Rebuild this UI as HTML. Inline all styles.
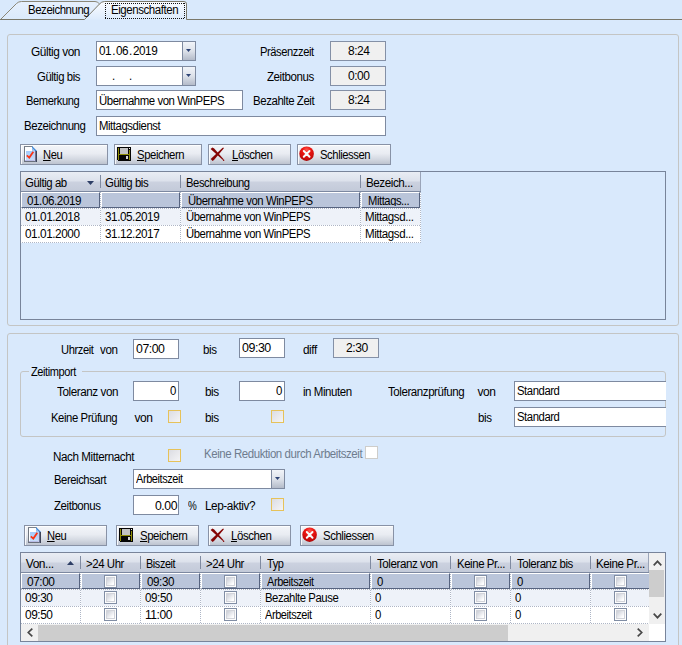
<!DOCTYPE html>
<html lang="de"><head><meta charset="utf-8"><title>Eigenschaften</title>
<style>
html,body{margin:0;padding:0}
body{width:682px;height:645px;overflow:hidden;background:#D9E9FC;position:relative;font-family:"Liberation Sans", sans-serif;font-size:11px;color:#000}
div,span.t,svg{position:absolute;box-sizing:border-box}
span.t{white-space:pre;line-height:14px;height:14px;font-size:12px;letter-spacing:-0.45px;transform-origin:0 0}
u{text-decoration:underline;text-underline-offset:1px}
.in{background:#fff;border:1px solid #7E8AA0}
.ro{background:#F0F0F0;border:1px solid #8490A6}
.btn{box-shadow:inset 1px 1px 0 rgba(255,255,255,.85);border:1px solid #8892A6;background:linear-gradient(#F3F5F9 0%,#E9ECF2 45%,#D3D8E1 75%,#BDC3CF 100%)}
.dd{border:1px solid #7E8AA0;background:linear-gradient(#F1F4F9 0%,#DDE2EA 50%,#B4BBC9 100%)}
.cb{border:1px solid #E6C25A;background:linear-gradient(135deg,#DCDDE2,#F4F4F6)}
.gc{border:1px solid #808DA4;background:#FDFDFD}
.gc::after{content:"";position:absolute;left:1px;top:1px;right:1px;bottom:1px;border:1px solid #D2D4DA;background:linear-gradient(135deg,#D0D3DB 10%,#FFFFFF 85%)}
.hd{background:linear-gradient(#E9EDF4 0%,#DDE2EC 45%,#CBD1DF 55%,#C3CAD9 100%)}
</style></head><body>
<svg width="682" height="22" style="left:0;top:0" viewBox="0 0 682 22">
<defs><linearGradient id="tg" x1="0" y1="0" x2="0" y2="1"><stop offset="0" stop-color="#E6F0FD"/><stop offset="1" stop-color="#DBEAFC"/></linearGradient>
<linearGradient id="tg2" x1="0" y1="0" x2="0" y2="1"><stop offset="0" stop-color="#FAFCFF"/><stop offset="1" stop-color="#DDEBFC"/></linearGradient></defs>
<path d="M0.5,19.5 L16.5,3.5 Q18.5,1.5 21.5,1.5 L95,1.5 Q98,1.5 99.5,3.5 L99.5,19.5 Z" fill="url(#tg)" stroke="none"/>
<path d="M0.5,19.5 L16.5,3.5 Q18.5,1.5 21.5,1.5 L95,1.5 Q98,1.5 99.5,4" fill="none" stroke="#8A8778" stroke-width="1"/>
<path d="M84.5,19.5 L99.5,4 Q101.5,1.5 104.5,1.5 L184,1.5 Q186.5,1.5 186.5,4 L186.5,19.5 Z" fill="url(#tg2)" stroke="none"/>
<path d="M0,19.5 L84.5,19.5 L99.5,4 Q101.5,1.5 104.5,1.5 L184,1.5 Q186.5,1.5 186.5,4 L186.5,19.5 L682,19.5" fill="none" stroke="#7A786A" stroke-width="1"/>
</svg>
<div style="left:105px;top:3px;width:80px;height:1px;background:repeating-linear-gradient(90deg,#111 0 1px,transparent 1px 2px)"></div>
<div style="left:105px;top:18px;width:80px;height:1px;background:repeating-linear-gradient(90deg,#111 0 1px,transparent 1px 2px)"></div>
<div style="left:105px;top:3px;width:1px;height:16px;background:repeating-linear-gradient(180deg,#111 0 1px,transparent 1px 2px)"></div>
<div style="left:184px;top:3px;width:1px;height:16px;background:repeating-linear-gradient(180deg,#111 0 1px,transparent 1px 2px)"></div>
<div style="left:7px;top:34px;width:672px;height:292px;border:1px solid #C4C5C4;border-radius:3px"></div>
<div style="left:7px;top:333px;width:672px;height:330px;border:1px solid #C4C5C4;border-radius:3px"></div>
<div class="in" style="left:96px;top:41px;width:100px;height:20px"></div>
<div class="dd" style="left:182px;top:41px;width:14px;height:20px"></div>
<svg width="5" height="3" style="left:186px;top:49px" viewBox="0 0 5 3"><path d="M0,0 L5,0 L2.5,3 Z" fill="#2E4475"/></svg>
<div class="in" style="left:96px;top:66px;width:100px;height:20px"></div>
<div class="dd" style="left:182px;top:66px;width:14px;height:20px"></div>
<svg width="5" height="3" style="left:186px;top:74px" viewBox="0 0 5 3"><path d="M0,0 L5,0 L2.5,3 Z" fill="#2E4475"/></svg>
<div class="in" style="left:96px;top:90px;width:147px;height:20px"></div>
<div class="in" style="left:96px;top:116px;width:290px;height:20px"></div>
<div class="ro" style="left:330px;top:41px;width:56px;height:20px"></div>
<div class="ro" style="left:330px;top:66px;width:56px;height:20px"></div>
<div class="ro" style="left:330px;top:90px;width:56px;height:20px"></div>
<div class="btn" style="left:20px;top:144px;width:88px;height:21px"></div>
<svg width="13" height="16" style="left:24px;top:146px" viewBox="0 0 13 16">
<defs><linearGradient id="ng1" x1="0" y1="0" x2="0" y2="1"><stop offset="0" stop-color="#A3CBFB"/><stop offset="1" stop-color="#C6DCF9"/></linearGradient></defs>
<path d="M0,0 L8,0 L13,5 L13,16 L0,16 Z" fill="#FDFEFF"/>
<rect x="2" y="5" width="8" height="9" fill="url(#ng1)"/>
<rect x="1" y="14" width="10" height="1" fill="#B9BDE6"/>
<rect x="10" y="5" width="1" height="10" fill="#C9CDEC"/>
<rect x="0" y="0" width="1" height="16" fill="#6F7680"/>
<rect x="0" y="0" width="8.5" height="1" fill="#7B828C"/>
<rect x="0" y="15" width="12" height="1" fill="#6A707C"/>
<rect x="11" y="4" width="1" height="12" fill="#6A7390"/>
<rect x="12" y="5" width="1" height="11" fill="#3E4458"/>
<path d="M8,0 L13,5 L11,5 L8,2 Z" fill="#2C7BD0"/>
<path d="M8,1.2 L8,4.8 L11.4,4.8 Z" fill="#8FB9EA"/>
<path d="M2.8,9.4 L5.3,11.6 L9.3,5.8" fill="none" stroke="#FA3414" stroke-width="1.8"/>
</svg>
<div class="btn" style="left:114px;top:144px;width:88px;height:21px"></div>
<svg width="14" height="14" style="left:117px;top:147px" viewBox="0 0 14 14" shape-rendering="crispEdges">
<path d="M0,0 L14,0 L14,14 L1,14 L1,13 L0,13 Z" fill="#050505"/>
<rect x="1" y="1" width="1" height="12" fill="#8E8C06"/>
<rect x="12" y="3" width="1" height="10" fill="#8E8C06"/>
<rect x="1" y="7" width="12" height="1" fill="#8E8C06"/>
<rect x="3" y="1" width="8" height="6" fill="#C2C2C2"/>
<rect x="12" y="1" width="1" height="1" fill="#F4F4F4"/>
<rect x="9" y="9" width="2" height="3" fill="#D6D6D6"/>
</svg>
<div class="btn" style="left:208px;top:144px;width:83px;height:21px"></div>
<svg width="15" height="15" style="left:209.5px;top:147.3px" viewBox="0 0 15 15">
<path d="M0.6,1.9 L2.4,0.5 L4.2,1.6 L13.6,12.2 L13.1,13 L12.3,12.6 Z" fill="#840404"/>
<circle cx="13.6" cy="13.2" r="0.75" fill="#840404"/>
<path d="M0.7,12.1 L2.5,14 L4,12.9 L13.9,1.3 L13.3,0.6 L12.4,0.9 Z" fill="#840404"/>
</svg>
<div class="btn" style="left:297px;top:144px;width:94px;height:21px"></div>
<svg width="16" height="16" style="left:299px;top:146px" viewBox="0 0 16 16">
<defs><radialGradient id="cg4" cx="0.5" cy="0.25" r="0.8"><stop offset="0" stop-color="#FF5A52"/><stop offset="0.35" stop-color="#EC1612"/><stop offset="0.8" stop-color="#C40A0A"/><stop offset="1" stop-color="#8A0606"/></radialGradient></defs>
<circle cx="7.6" cy="7.7" r="7.3" fill="url(#cg4)"/>
<path d="M4.8,5 L10.5,10.7 M10.5,5 L4.8,10.7" stroke="#F8FBFB" stroke-width="2" stroke-linecap="round" fill="none"/>
</svg>
<div class="btn" style="left:24px;top:525px;width:83px;height:21px"></div>
<svg width="13" height="16" style="left:28px;top:527px" viewBox="0 0 13 16">
<defs><linearGradient id="ng5" x1="0" y1="0" x2="0" y2="1"><stop offset="0" stop-color="#A3CBFB"/><stop offset="1" stop-color="#C6DCF9"/></linearGradient></defs>
<path d="M0,0 L8,0 L13,5 L13,16 L0,16 Z" fill="#FDFEFF"/>
<rect x="2" y="5" width="8" height="9" fill="url(#ng5)"/>
<rect x="1" y="14" width="10" height="1" fill="#B9BDE6"/>
<rect x="10" y="5" width="1" height="10" fill="#C9CDEC"/>
<rect x="0" y="0" width="1" height="16" fill="#6F7680"/>
<rect x="0" y="0" width="8.5" height="1" fill="#7B828C"/>
<rect x="0" y="15" width="12" height="1" fill="#6A707C"/>
<rect x="11" y="4" width="1" height="12" fill="#6A7390"/>
<rect x="12" y="5" width="1" height="11" fill="#3E4458"/>
<path d="M8,0 L13,5 L11,5 L8,2 Z" fill="#2C7BD0"/>
<path d="M8,1.2 L8,4.8 L11.4,4.8 Z" fill="#8FB9EA"/>
<path d="M2.8,9.4 L5.3,11.6 L9.3,5.8" fill="none" stroke="#FA3414" stroke-width="1.8"/>
</svg>
<div class="btn" style="left:116px;top:525px;width:83px;height:21px"></div>
<svg width="14" height="14" style="left:119px;top:528px" viewBox="0 0 14 14" shape-rendering="crispEdges">
<path d="M0,0 L14,0 L14,14 L1,14 L1,13 L0,13 Z" fill="#050505"/>
<rect x="1" y="1" width="1" height="12" fill="#8E8C06"/>
<rect x="12" y="3" width="1" height="10" fill="#8E8C06"/>
<rect x="1" y="7" width="12" height="1" fill="#8E8C06"/>
<rect x="3" y="1" width="8" height="6" fill="#C2C2C2"/>
<rect x="12" y="1" width="1" height="1" fill="#F4F4F4"/>
<rect x="9" y="9" width="2" height="3" fill="#D6D6D6"/>
</svg>
<div class="btn" style="left:208px;top:525px;width:83px;height:21px"></div>
<svg width="15" height="15" style="left:209.7px;top:528.3px" viewBox="0 0 15 15">
<path d="M0.6,1.9 L2.4,0.5 L4.2,1.6 L13.6,12.2 L13.1,13 L12.3,12.6 Z" fill="#840404"/>
<circle cx="13.6" cy="13.2" r="0.75" fill="#840404"/>
<path d="M0.7,12.1 L2.5,14 L4,12.9 L13.9,1.3 L13.3,0.6 L12.4,0.9 Z" fill="#840404"/>
</svg>
<div class="btn" style="left:300px;top:525px;width:94px;height:21px"></div>
<svg width="16" height="16" style="left:302px;top:527px" viewBox="0 0 16 16">
<defs><radialGradient id="cg8" cx="0.5" cy="0.25" r="0.8"><stop offset="0" stop-color="#FF5A52"/><stop offset="0.35" stop-color="#EC1612"/><stop offset="0.8" stop-color="#C40A0A"/><stop offset="1" stop-color="#8A0606"/></radialGradient></defs>
<circle cx="7.6" cy="7.7" r="7.3" fill="url(#cg8)"/>
<path d="M4.8,5 L10.5,10.7 M10.5,5 L4.8,10.7" stroke="#F8FBFB" stroke-width="2" stroke-linecap="round" fill="none"/>
</svg>
<div style="left:20px;top:171px;width:646px;height:149px;border:1px solid #78849A"></div>
<div class="hd" style="left:21px;top:172px;width:400px;height:19px"></div>
<div style="left:21px;top:191px;width:400px;height:1px;background:#7C88A0"></div>
<div style="left:420px;top:172px;width:1px;height:19px;background:#9AA4B8"></div>
<div style="left:100px;top:175px;width:1px;height:13px;background:#7F8AA0"></div>
<div style="left:180px;top:175px;width:1px;height:13px;background:#7F8AA0"></div>
<div style="left:360px;top:175px;width:1px;height:13px;background:#7F8AA0"></div>
<div style="left:21px;top:192px;width:400px;height:16px;background:#fff"></div>
<div style="left:21px;top:209px;width:400px;height:16px;background:#EEF2F9"></div>
<div style="left:21px;top:226px;width:400px;height:16px;background:#fff"></div>
<div style="left:21px;top:192px;width:79px;height:16px;background:#BAC5DA;border-top:1px solid #fff;border-left:1px solid #fff;border-bottom:1px solid #56637F;border-right:1px solid #56637F"></div>
<div style="left:101px;top:192px;width:79px;height:16px;background:#BAC5DA;border-top:1px solid #fff;border-left:1px solid #fff;border-bottom:1px solid #56637F;border-right:1px solid #56637F"></div>
<div style="left:181px;top:192px;width:179px;height:16px;background:#BAC5DA;border-top:1px solid #fff;border-left:1px solid #fff;border-bottom:1px solid #56637F;border-right:1px solid #56637F"></div>
<div style="left:361px;top:192px;width:59px;height:16px;background:#BAC5DA;border-top:1px solid #fff;border-left:1px solid #fff;border-bottom:1px solid #56637F;border-right:1px solid #56637F"></div>
<div style="left:21px;top:208px;width:400px;height:1px;background:repeating-linear-gradient(90deg,#fff 0 1px,#AEB6C6 1px 2px)"></div>
<div style="left:21px;top:225px;width:400px;height:1px;background:repeating-linear-gradient(90deg,#AEB6C6 0 1px,#fff 1px 2px)"></div>
<div style="left:21px;top:242px;width:400px;height:1px;background:repeating-linear-gradient(90deg,#fff 0 1px,#AEB6C6 1px 2px)"></div>
<div style="left:100px;top:192px;width:1px;height:51px;background:repeating-linear-gradient(180deg,#AEB6C6 0 1px,#fff 1px 2px)"></div>
<div style="left:180px;top:192px;width:1px;height:51px;background:repeating-linear-gradient(180deg,#AEB6C6 0 1px,#fff 1px 2px)"></div>
<div style="left:360px;top:192px;width:1px;height:51px;background:repeating-linear-gradient(180deg,#AEB6C6 0 1px,#fff 1px 2px)"></div>
<div style="left:420px;top:192px;width:1px;height:51px;background:repeating-linear-gradient(180deg,#AEB6C6 0 1px,#fff 1px 2px)"></div>
<svg width="7" height="4" style="left:87.3px;top:181px" viewBox="0 0 7 4"><path d="M0,0 L7,0 L3.5,4 Z" fill="#2E3F66"/></svg>
<div class="in" style="left:133px;top:339px;width:46px;height:20px"></div>
<div class="in" style="left:239px;top:338px;width:46px;height:20px"></div>
<div class="ro" style="left:333px;top:338px;width:46px;height:20px"></div>
<div style="left:20px;top:371px;width:646px;height:66px;border:1px solid #C4C5C4;border-radius:3px"></div>
<div style="left:29px;top:370px;width:53px;height:3px;background:#D9E9FC"></div>
<div class="in" style="left:133px;top:381px;width:46px;height:20px"></div>
<div class="in" style="left:239px;top:381px;width:46px;height:20px"></div>
<div class="in" style="left:514px;top:381px;width:152px;height:20px;border-right:none"></div>
<div class="cb" style="left:168px;top:410px;width:13px;height:13px"></div>
<div class="cb" style="left:271px;top:410px;width:13px;height:13px"></div>
<div class="in" style="left:514px;top:407px;width:152px;height:20px;border-right:none"></div>
<div class="cb" style="left:168px;top:449px;width:13px;height:13px"></div>
<div style="left:365px;top:446px;width:13px;height:13px;background:#fff;border:1px solid #CECDCA"></div>
<div class="in" style="left:133px;top:469px;width:152px;height:20px"></div>
<div class="dd" style="left:271px;top:469px;width:14px;height:20px"></div>
<svg width="5" height="3" style="left:275px;top:477px" viewBox="0 0 5 3"><path d="M0,0 L5,0 L2.5,3 Z" fill="#2E4475"/></svg>
<div class="in" style="left:133px;top:495px;width:46px;height:20px"></div>
<div class="cb" style="left:271px;top:498px;width:13px;height:13px"></div>
<div style="left:20px;top:552px;width:646px;height:90px;border:1px solid #78849A"></div>
<div class="hd" style="left:21px;top:553px;width:628px;height:19px"></div>
<div style="left:21px;top:572px;width:628px;height:1px;background:#7C88A0"></div>
<div style="left:648px;top:553px;width:1px;height:19px;background:#9AA4B8"></div>
<div style="left:80px;top:556px;width:1px;height:13px;background:#7F8AA0"></div>
<div style="left:140px;top:556px;width:1px;height:13px;background:#7F8AA0"></div>
<div style="left:200px;top:556px;width:1px;height:13px;background:#7F8AA0"></div>
<div style="left:260px;top:556px;width:1px;height:13px;background:#7F8AA0"></div>
<div style="left:370px;top:556px;width:1px;height:13px;background:#7F8AA0"></div>
<div style="left:450px;top:556px;width:1px;height:13px;background:#7F8AA0"></div>
<div style="left:510px;top:556px;width:1px;height:13px;background:#7F8AA0"></div>
<div style="left:590px;top:556px;width:1px;height:13px;background:#7F8AA0"></div>
<div style="left:21px;top:573px;width:628px;height:16px;background:#fff"></div>
<div style="left:21px;top:590px;width:628px;height:16px;background:#EEF2F9"></div>
<div style="left:21px;top:607px;width:628px;height:16px;background:#fff"></div>
<div style="left:21px;top:573px;width:59px;height:16px;background:#BAC5DA;border-top:1px solid #fff;border-left:1px solid #fff;border-bottom:1px solid #56637F;border-right:1px solid #56637F"></div>
<div style="left:81px;top:573px;width:59px;height:16px;background:#BAC5DA;border-top:1px solid #fff;border-left:1px solid #fff;border-bottom:1px solid #56637F;border-right:1px solid #56637F"></div>
<div style="left:141px;top:573px;width:59px;height:16px;background:#BAC5DA;border-top:1px solid #fff;border-left:1px solid #fff;border-bottom:1px solid #56637F;border-right:1px solid #56637F"></div>
<div style="left:201px;top:573px;width:59px;height:16px;background:#BAC5DA;border-top:1px solid #fff;border-left:1px solid #fff;border-bottom:1px solid #56637F;border-right:1px solid #56637F"></div>
<div style="left:261px;top:573px;width:109px;height:16px;background:#BAC5DA;border-top:1px solid #fff;border-left:1px solid #fff;border-bottom:1px solid #56637F;border-right:1px solid #56637F"></div>
<div style="left:371px;top:573px;width:79px;height:16px;background:#BAC5DA;border-top:1px solid #fff;border-left:1px solid #fff;border-bottom:1px solid #56637F;border-right:1px solid #56637F"></div>
<div style="left:451px;top:573px;width:59px;height:16px;background:#BAC5DA;border-top:1px solid #fff;border-left:1px solid #fff;border-bottom:1px solid #56637F;border-right:1px solid #56637F"></div>
<div style="left:511px;top:573px;width:79px;height:16px;background:#BAC5DA;border-top:1px solid #fff;border-left:1px solid #fff;border-bottom:1px solid #56637F;border-right:1px solid #56637F"></div>
<div style="left:591px;top:573px;width:60px;height:16px;background:#BAC5DA;border-top:1px solid #fff;border-left:1px solid #fff;border-bottom:1px solid #56637F;border-right:1px solid #56637F"></div>
<div style="left:21px;top:589px;width:628px;height:1px;background:repeating-linear-gradient(90deg,#AEB6C6 0 1px,#fff 1px 2px)"></div>
<div style="left:21px;top:606px;width:628px;height:1px;background:repeating-linear-gradient(90deg,#fff 0 1px,#AEB6C6 1px 2px)"></div>
<div style="left:21px;top:623px;width:628px;height:1px;background:repeating-linear-gradient(90deg,#AEB6C6 0 1px,#fff 1px 2px)"></div>
<div style="left:80px;top:573px;width:1px;height:51px;background:repeating-linear-gradient(180deg,#fff 0 1px,#AEB6C6 1px 2px)"></div>
<div style="left:140px;top:573px;width:1px;height:51px;background:repeating-linear-gradient(180deg,#fff 0 1px,#AEB6C6 1px 2px)"></div>
<div style="left:200px;top:573px;width:1px;height:51px;background:repeating-linear-gradient(180deg,#fff 0 1px,#AEB6C6 1px 2px)"></div>
<div style="left:260px;top:573px;width:1px;height:51px;background:repeating-linear-gradient(180deg,#fff 0 1px,#AEB6C6 1px 2px)"></div>
<div style="left:370px;top:573px;width:1px;height:51px;background:repeating-linear-gradient(180deg,#fff 0 1px,#AEB6C6 1px 2px)"></div>
<div style="left:450px;top:573px;width:1px;height:51px;background:repeating-linear-gradient(180deg,#fff 0 1px,#AEB6C6 1px 2px)"></div>
<div style="left:510px;top:573px;width:1px;height:51px;background:repeating-linear-gradient(180deg,#fff 0 1px,#AEB6C6 1px 2px)"></div>
<div style="left:590px;top:573px;width:1px;height:51px;background:repeating-linear-gradient(180deg,#fff 0 1px,#AEB6C6 1px 2px)"></div>
<div style="left:651px;top:573px;width:1px;height:51px;background:repeating-linear-gradient(180deg,#AEB6C6 0 1px,#fff 1px 2px)"></div>
<svg width="7" height="4" style="left:66.7px;top:561px" viewBox="0 0 7 4"><path d="M0,4 L7,4 L3.5,0 Z" fill="#2E3F66"/></svg>
<div class="gc" style="left:104px;top:575px;width:13px;height:13px"></div>
<div class="gc" style="left:224px;top:575px;width:13px;height:13px"></div>
<div class="gc" style="left:474px;top:575px;width:13px;height:13px"></div>
<div class="gc" style="left:614px;top:575px;width:13px;height:13px"></div>
<div class="gc" style="left:104px;top:591px;width:13px;height:13px"></div>
<div class="gc" style="left:224px;top:591px;width:13px;height:13px"></div>
<div class="gc" style="left:474px;top:591px;width:13px;height:13px"></div>
<div class="gc" style="left:614px;top:591px;width:13px;height:13px"></div>
<div class="gc" style="left:104px;top:608px;width:13px;height:13px"></div>
<div class="gc" style="left:224px;top:608px;width:13px;height:13px"></div>
<div class="gc" style="left:474px;top:608px;width:13px;height:13px"></div>
<div class="gc" style="left:614px;top:608px;width:13px;height:13px"></div>
<div style="left:649px;top:553px;width:16px;height:71px;background:#F0F0F0"></div>
<div style="left:649px;top:570px;width:15px;height:27px;background:#CDCDCD"></div>
<svg width="9" height="6" style="left:652.5px;top:559.5px" viewBox="0 0 9 6"><path d="M0.7,5.3 L4.5,1.3 L8.3,5.3" fill="none" stroke="#484848" stroke-width="1.7"/></svg>
<svg width="9" height="6" style="left:652.5px;top:613px" viewBox="0 0 9 6"><path d="M0.7,0.7 L4.5,4.7 L8.3,0.7" fill="none" stroke="#484848" stroke-width="1.7"/></svg>
<div style="left:21px;top:624px;width:628px;height:17px;background:#F0F0F0"></div>
<div style="left:38px;top:625px;width:470px;height:16px;background:#CDCDCD"></div>
<div style="left:649px;top:624px;width:16px;height:17px;background:#fff"></div>
<svg width="6" height="9" style="left:26.5px;top:628px" viewBox="0 0 6 9"><path d="M5.3,0.7 L1.3,4.5 L5.3,8.3" fill="none" stroke="#484848" stroke-width="1.7"/></svg>
<svg width="6" height="9" style="left:637px;top:628px" viewBox="0 0 6 9"><path d="M0.7,0.7 L4.7,4.5 L0.7,8.3" fill="none" stroke="#484848" stroke-width="1.7"/></svg>
<span class="t" style="left:27.92px;top:3px;transform:scaleX(0.951);">Bezeichnung</span>
<span class="t" style="left:110.82px;top:3px;transform:scaleX(0.957);">Eigenschaften</span>
<span class="t" style="left:30.51px;top:45px;transform:scaleX(0.989);">Gültig von</span>
<span class="t" style="left:36.53px;top:70px;transform:scaleX(0.944);">Gültig bis</span>
<span class="t" style="left:26.24px;top:94px;transform:scaleX(0.929);">Bemerkung</span>
<span class="t" style="left:23.52px;top:119px;transform:scaleX(0.954);">Bezeichnung</span>
<span class="t" style="left:260.03px;top:45px;transform:scaleX(0.930);">Präsenzzeit</span>
<span class="t" style="left:267.02px;top:70px;transform:scaleX(0.960);">Zeitbonus</span>
<span class="t" style="left:253.27px;top:94px;transform:scaleX(0.954);">Bezahlte Zeit</span>
<span class="t" style="left:99.21px;top:44px;transform:scaleX(0.978);">01<span style="padding:0 1px">.</span>06<span style="padding:0 1px">.</span>2019</span>
<span class="t" style="left:99.23px;top:69px;transform:scaleX(0.950);"><span style="display:inline-block;width:12.8px"></span><span style="padding:0 1px">.</span><span style="display:inline-block;width:13px"></span><span style="padding:0 1px">.</span></span>
<span class="t" style="left:99.28px;top:94px;transform:scaleX(0.949);">Übernahme von WinPEPS</span>
<span class="t" style="left:99.28px;top:119px;transform:scaleX(0.944);">Mittagsdienst</span>
<span class="t" style="left:347.75px;top:44px;transform:scaleX(0.997);">8:24</span>
<span class="t" style="left:347.75px;top:69px;transform:scaleX(0.997);">0:00</span>
<span class="t" style="left:347.75px;top:93px;transform:scaleX(0.997);">8:24</span>
<span class="t" style="left:43.29px;top:148px;transform:scaleX(0.930);"><u>N</u>eu</span>
<span class="t" style="left:137.03px;top:148px;transform:scaleX(0.944);"><u>S</u>peichern</span>
<span class="t" style="left:231.52px;top:148px;transform:scaleX(0.958);"><u>L</u>öschen</span>
<span class="t" style="left:320.28px;top:148px;transform:scaleX(0.938);">Schliessen</span>
<span class="t" style="left:47.04px;top:529px;transform:scaleX(0.930);"><u>N</u>eu</span>
<span class="t" style="left:139.53px;top:529px;transform:scaleX(0.949);"><u>S</u>peichern</span>
<span class="t" style="left:230.77px;top:529px;transform:scaleX(0.958);"><u>L</u>öschen</span>
<span class="t" style="left:322.53px;top:529px;transform:scaleX(0.947);">Schliessen</span>
<span class="t" style="left:25.28px;top:176px;transform:scaleX(0.949);">Gültig ab</span>
<span class="t" style="left:105.03px;top:176px;transform:scaleX(0.949);">Gültig bis</span>
<span class="t" style="left:186.28px;top:176px;transform:scaleX(0.937);">Beschreibung</span>
<span class="t" style="left:366.27px;top:176px;transform:scaleX(0.970);">Bezeich...</span>
<span class="t" style="left:27.21px;top:194px;transform:scaleX(0.973);">01.06.2019</span>
<span class="t" style="left:187.83px;top:194px;transform:scaleX(0.945);">Übernahme von WinPEPS</span>
<span class="t" style="left:367.83px;top:194px;transform:scaleX(0.932);height:12px;overflow:hidden;">Mittags...</span>
<span class="t" style="left:24.51px;top:210px;transform:scaleX(0.981);">01.01.2018</span>
<span class="t" style="left:105.01px;top:210px;transform:scaleX(0.976);">31.05.2019</span>
<span class="t" style="left:185.78px;top:210px;transform:scaleX(0.941);">Übernahme von WinPEPS</span>
<span class="t" style="left:365.27px;top:210px;transform:scaleX(0.962);">Mittagsd...</span>
<span class="t" style="left:24.51px;top:227px;transform:scaleX(0.981);">01.01.2000</span>
<span class="t" style="left:105.01px;top:227px;transform:scaleX(0.976);">31.12.2017</span>
<span class="t" style="left:185.78px;top:227px;transform:scaleX(0.941);">Übernahme von WinPEPS</span>
<span class="t" style="left:365.27px;top:227px;transform:scaleX(0.962);">Mittagsd...</span>
<span class="t" style="left:61.28px;top:343px;transform:scaleX(0.931);">Uhrzeit</span>
<span class="t" style="left:100.01px;top:343px;transform:scaleX(0.971);">von</span>
<span class="t" style="left:136.49px;top:342px;transform:scaleX(1.026);">07:00</span>
<span class="t" style="left:203.27px;top:343px;transform:scaleX(0.963);">bis</span>
<span class="t" style="left:242.48px;top:341px;transform:scaleX(1.036);">09:30</span>
<span class="t" style="left:302.51px;top:343px;transform:scaleX(0.981);">diff</span>
<span class="t" style="left:345.75px;top:341px;transform:scaleX(1.009);">2:30</span>
<span class="t" style="left:30.79px;top:365px;transform:scaleX(0.920);">Zeitimport</span>
<span class="t" style="left:56.51px;top:384.5px;transform:scaleX(0.974);">Toleranz von</span>
<span class="t" style="left:170.03px;top:384px;transform:scaleX(0.950);">0</span>
<span class="t" style="left:205.01px;top:384.5px;transform:scaleX(0.981);">bis</span>
<span class="t" style="left:276.02px;top:384px;transform:scaleX(0.950);">0</span>
<span class="t" style="left:302.52px;top:384.5px;transform:scaleX(0.958);">in Minuten</span>
<span class="t" style="left:388.27px;top:384.5px;transform:scaleX(0.961);">Toleranzprüfung</span>
<span class="t" style="left:477.5px;top:384.5px;transform:scaleX(1.000);">von</span>
<span class="t" style="left:517.03px;top:384px;transform:scaleX(0.942);">Standard</span>
<span class="t" style="left:50.78px;top:410.5px;transform:scaleX(0.943);">Keine Prüfung</span>
<span class="t" style="left:134.5px;top:410.5px;transform:scaleX(1.000);">von</span>
<span class="t" style="left:205.01px;top:410.5px;transform:scaleX(0.981);">bis</span>
<span class="t" style="left:477.52px;top:410.5px;transform:scaleX(0.963);">bis</span>
<span class="t" style="left:517.03px;top:409.5px;transform:scaleX(0.942);">Standard</span>
<span class="t" style="left:53.27px;top:450px;transform:scaleX(0.970);">Nach Mitternacht</span>
<span class="t" style="left:204.02px;top:447px;transform:scaleX(0.957);color:#6E7C8E;">Keine Reduktion durch Arbeitszeit</span>
<span class="t" style="left:54.03px;top:473px;transform:scaleX(0.937);">Bereichsart</span>
<span class="t" style="left:136.29px;top:472px;transform:scaleX(0.914);">Arbeitszeit</span>
<span class="t" style="left:54.02px;top:499px;transform:scaleX(0.955);">Zeitbonus</span>
<span class="t" style="left:154.99px;top:498.5px;transform:scaleX(1.021);">0.00</span>
<span class="t" style="left:187.84px;top:498.5px;transform:scaleX(0.822);">%</span>
<span class="t" style="left:205.01px;top:498.5px;transform:scaleX(0.983);">Lep-aktiv?</span>
<span class="t" style="left:25.75px;top:557px;transform:scaleX(1.000);">Von...</span>
<span class="t" style="left:85.77px;top:557px;transform:scaleX(0.952);">&gt;24 Uhr</span>
<span class="t" style="left:145.8px;top:557px;transform:scaleX(0.907);">Biszeit</span>
<span class="t" style="left:205.77px;top:557px;transform:scaleX(0.952);">&gt;24 Uhr</span>
<span class="t" style="left:266.54px;top:557px;transform:scaleX(0.914);">Typ</span>
<span class="t" style="left:377.02px;top:557px;transform:scaleX(0.966);">Toleranz von</span>
<span class="t" style="left:456.52px;top:557px;transform:scaleX(0.951);">Keine Pr...</span>
<span class="t" style="left:516.52px;top:557px;transform:scaleX(0.953);">Toleranz bis</span>
<span class="t" style="left:595.92px;top:557px;transform:scaleX(0.968);">Keine Pr...</span>
<span class="t" style="left:27.31px;top:574.5px;transform:scaleX(0.990);">07:00</span>
<span class="t" style="left:147.31px;top:574.5px;transform:scaleX(0.971);">09:30</span>
<span class="t" style="left:267.04px;top:574.5px;transform:scaleX(0.914);">Arbeitszeit</span>
<span class="t" style="left:377.02px;top:574.5px;transform:scaleX(0.950);">0</span>
<span class="t" style="left:517.02px;top:574.5px;transform:scaleX(0.950);">0</span>
<span class="t" style="left:24.51px;top:591px;transform:scaleX(0.990);">09:30</span>
<span class="t" style="left:144.51px;top:591px;transform:scaleX(0.971);">09:50</span>
<span class="t" style="left:265.03px;top:591px;transform:scaleX(0.942);">Bezahlte Pause</span>
<span class="t" style="left:375.02px;top:591px;transform:scaleX(0.950);">0</span>
<span class="t" style="left:515.02px;top:591px;transform:scaleX(0.950);">0</span>
<span class="t" style="left:24.51px;top:608px;transform:scaleX(0.990);">09:50</span>
<span class="t" style="left:144.5px;top:608px;transform:scaleX(1.004);">11:00</span>
<span class="t" style="left:265.04px;top:608px;transform:scaleX(0.914);">Arbeitszeit</span>
<span class="t" style="left:375.02px;top:608px;transform:scaleX(0.950);">0</span>
<span class="t" style="left:515.02px;top:608px;transform:scaleX(0.950);">0</span>
</body></html>
